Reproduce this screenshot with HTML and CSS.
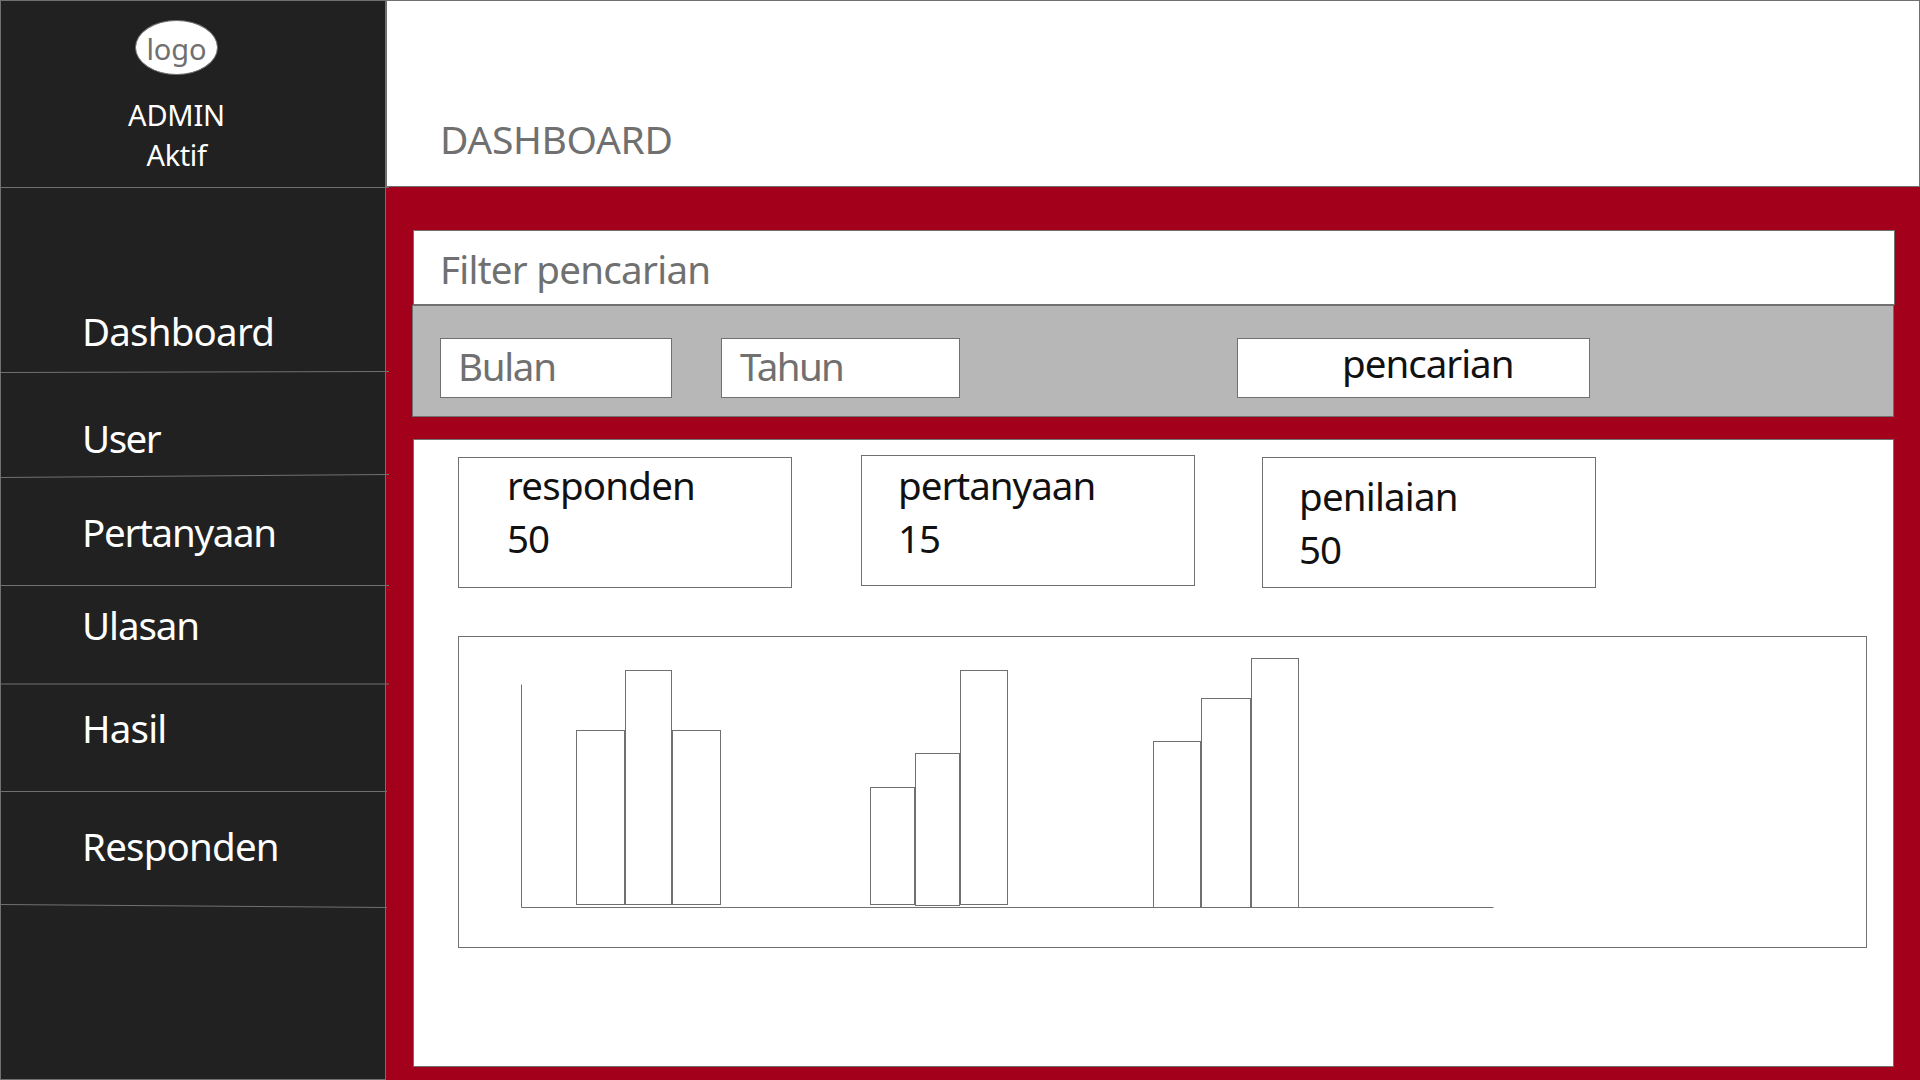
FILE: index.html
```html
<!DOCTYPE html>
<html lang="id">
<head>
<meta charset="utf-8">
<title>Dashboard</title>
<link rel="stylesheet" href="styles.css">
</head>
<body>
<div class="app">
  <aside class="sidebar">
    <div class="profile">
      <div class="logo">logo</div>
      <p class="profile-name">ADMIN</p>
      <p class="profile-status">Aktif</p>
    </div>
    <nav class="menu">
      <a class="menu-item menu-dashboard">Dashboard</a>
      <a class="menu-item menu-user">User</a>
      <a class="menu-item menu-pertanyaan">Pertanyaan</a>
      <a class="menu-item menu-ulasan">Ulasan</a>
      <a class="menu-item menu-hasil">Hasil</a>
      <a class="menu-item menu-responden">Responden</a>
    </nav>
    <svg class="dividers" width="389" height="1080" viewBox="0 0 389 1080" aria-hidden="true">
      <path d="M0 187.5H389M0 372.5L389 371.5M0 477.5L389 474.5M0 585.5H389M0 684H389M0 791.5H387M0 904.5L387 907.5"/>
    </svg>
  </aside>
  <div class="main">
    <header class="header"><h1 class="title">DASHBOARD</h1></header>
    <main class="content">
      <section class="filter">
        <h2 class="filter-title">Filter pencarian</h2>
        <div class="filter-bar">
          <div class="field field-bulan">Bulan</div>
          <div class="field field-tahun">Tahun</div>
          <div class="field field-search">pencarian</div>
        </div>
      </section>
      <section class="panel">
        <div class="cards">
          <div class="card card-responden"><p class="card-label">responden</p><p class="card-value">50</p></div>
          <div class="card card-pertanyaan"><p class="card-label">pertanyaan</p><p class="card-value">15</p></div>
          <div class="card card-penilaian"><p class="card-label">penilaian</p><p class="card-value">50</p></div>
        </div>
        <div class="chart">
          <svg class="chart-plot" width="1407" height="310" viewBox="459 637 1407 310" aria-hidden="true">
            <path d="M521.5 684.5V907.5H1493.5"/>
            <rect x="576.5" y="730.5" width="48" height="174"/>
            <rect x="625.5" y="670.5" width="46" height="234"/>
            <rect x="672.5" y="730.5" width="48" height="174"/>
            <rect x="870.5" y="787.5" width="44" height="117"/>
            <rect x="915.5" y="753.5" width="44" height="152"/>
            <rect x="960.5" y="670.5" width="47" height="234"/>
            <rect x="1153.5" y="741.5" width="47" height="166"/>
            <rect x="1201.5" y="698.5" width="49" height="209"/>
            <rect x="1251.5" y="658.5" width="47" height="249"/>
          </svg>
        </div>
      </section>
    </main>
  </div>
</div>
</body>
</html>
```

FILE: styles.css
```css
* { box-sizing: border-box; }

body {
  margin: 0;
  font-family: "Noto Sans", "Open Sans", sans-serif;
  font-size: 38.5px;
  font-weight: 400;
  letter-spacing: -0.8px;
  line-height: 52px;
  color: #707070;
}

h1, h2, p { margin: 0; font: inherit; }

.app { display: flex; width: 1920px; height: 1080px; overflow: hidden; }

/* Sidebar */
.sidebar {
  position: relative;
  z-index: 1;
  flex: 0 0 386px;
  border: 1px solid #707070;
  background: #212121;
  color: #fff;
}

.profile {
  display: flex;
  flex-direction: column;
  align-items: center;
  width: 351px;
  height: 187px;
  padding-top: 19px;
  font-size: 29px;
  line-height: 40px;
}

.logo {
  width: 83px;
  height: 55px;
  margin-bottom: 20px;
  padding-top: 8px;
  border: 1px solid #707070;
  border-radius: 50%;
  background: #fff;
  color: #707070;
  text-align: center;
  letter-spacing: -0.1px;
}

.profile-name { letter-spacing: -0.2px; }
.profile-status { letter-spacing: -0.4px; }

.menu { display: flex; flex-direction: column; }
.menu-item { padding-left: 81px; }
.menu-dashboard { height: 184px; padding-top: 117px; }
.menu-user { height: 104px; padding-top: 40px; letter-spacing: -1.5px; }
.menu-pertanyaan { height: 109px; padding-top: 30px; letter-spacing: -1.3px; }
.menu-ulasan { height: 100px; padding-top: 14px; letter-spacing: -1.1px; }
.menu-hasil { height: 106px; padding-top: 17px; letter-spacing: -0.8px; }
.menu-responden { height: 115px; padding-top: 29px; }

.dividers {
  position: absolute;
  top: -1px;
  left: -1px;
  fill: none;
  stroke: #707070;
}

/* Main column */
.main { flex: 1; display: flex; flex-direction: column; background: #a3001b; }

.header {
  height: 187px;
  padding: 111px 0 0 53px;
  border: 1px solid #707070;
  background: #fff;
}

.title { font-size: 39px; line-height: 53px; letter-spacing: -0.34px; }

.content { padding: 43px 25px 0 26px; }

.filter-title {
  height: 75px;
  margin-left: 1px;
  padding: 12px 0 0 26px;
  border: 1px solid #707070;
  background: #fff;
  letter-spacing: -0.72px;
}

.filter-bar {
  display: flex;
  width: 1482px;
  height: 112px;
  padding: 32px 0 0 27px;
  border: 1px solid #707070;
  background: #b7b7b7;
}

.field {
  height: 60px;
  border: 1px solid #707070;
  background: #fff;
  line-height: 46px;
  letter-spacing: -1px;
}

.field-bulan { width: 232px; margin-right: 49px; padding: 4px 0 0 17px; letter-spacing: -1.3px; }
.field-tahun { width: 239px; margin-right: 277px; padding: 4px 0 0 18px; letter-spacing: -1.6px; }
.field-search { width: 353px; padding: 1px 0 0 104px; color: #111; }

/* Result panel */
.panel {
  width: 1481px;
  height: 628px;
  margin: 22px 0 0 1px;
  padding: 15px 0 0 44px;
  border: 1px solid #707070;
  background: #fff;
}

.cards { display: flex; height: 133px; color: #111; line-height: 53px; }

.card { width: 334px; height: 131px; border: 1px solid #707070; }
.card-responden { margin: 2px 69px 0 0; padding: 1px 0 0 48px; }
.card-pertanyaan { margin-right: 67px; padding: 3px 0 0 36px; letter-spacing: -1px; }
.card-penilaian { margin-top: 2px; padding: 12px 0 0 36px; }
.card-value { letter-spacing: -1px; }

.chart {
  width: 1409px;
  height: 312px;
  margin-top: 48px;
  border: 1px solid #707070;
}

.chart-plot { display: block; fill: #fff; stroke: #707070; }
```
